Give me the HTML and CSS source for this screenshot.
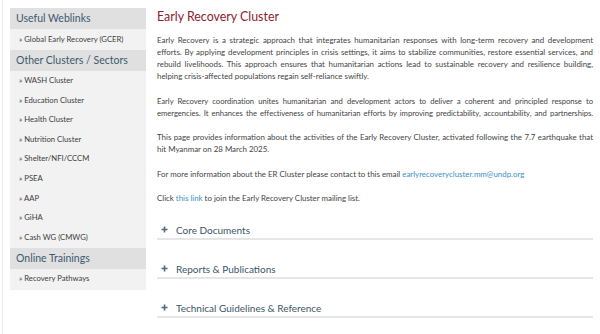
FILE: index.html
```html
<!DOCTYPE html>
<html>
<head>
    <title>Early Recovery Cluster</title>
    <link rel="stylesheet" href="styles.css">
</head>
<body>
    <div class="page">
        <div class="sidebar">
            <h3 class="side-title">Useful Weblinks</h3>
            <ul class="side-list">
                <li>» Global Early Recovery (GCER)</li>
            </ul>
            <h3 class="side-title">Other Clusters / Sectors</h3>
            <ul class="side-list">
                <li>» WASH Cluster</li>
                <li>» Education Cluster</li>
                <li>» Health Cluster</li>
                <li>» Nutrition Cluster</li>
                <li>» Shelter/NFI/CCCM</li>
                <li>» PSEA</li>
                <li>» AAP</li>
                <li>» GiHA</li>
                <li>» Cash WG (CMWG)</li>
            </ul>
            <h3 class="side-title">Online Trainings</h3>
            <ul class="side-list">
                <li>» Recovery Pathways</li>
            </ul>
        </div>
        <div class="main">
            <h1 class="title">Early Recovery Cluster</h1>
            <p>Early Recovery is a strategic approach that integrates humanitarian responses with long-term recovery and development efforts. By applying development principles in crisis settings, it aims to stabilize communities, restore essential services, and rebuild livelihoods. This approach ensures that humanitarian actions lead to sustainable recovery and resilience building, helping crisis-affected populations regain self-reliance swiftly.</p>
            <p class="tight">Early Recovery coordination unites humanitarian and development actors to deliver a coherent and principled response to<br>emergencies. It enhances the effectiveness of humanitarian efforts by improving predictability, accountability, and partnerships.</p>
            <p>This page provides information about the activities of the Early Recovery Cluster, activated following the 7.7 earthquake that hit Myanmar on 28 March 2025.</p>
            <p>For more information about the ER Cluster please contact to this email <a href="#">earlyrecoverycluster.mm@undp.org</a></p>
            <p>Click <a href="#">this link</a> to join the Early Recovery Cluster mailing list.</p>

            <div class="accordion">
                <div class="acc-item">
                    <svg class="plus" width="7" height="7" viewBox="0 0 7 7"><path d="M3.5 0.5v6M0.5 3.5h6" stroke="#4d6b80" stroke-width="1.6"/></svg>
                    <span>Core Documents</span>
                </div>
                <div class="acc-item">
                    <svg class="plus" width="7" height="7" viewBox="0 0 7 7"><path d="M3.5 0.5v6M0.5 3.5h6" stroke="#4d6b80" stroke-width="1.6"/></svg>
                    <span>Reports &amp; Publications</span>
                </div>
                <div class="acc-item">
                    <svg class="plus" width="7" height="7" viewBox="0 0 7 7"><path d="M3.5 0.5v6M0.5 3.5h6" stroke="#4d6b80" stroke-width="1.6"/></svg>
                    <span>Technical Guidelines &amp; Reference</span>
                </div>
            </div>
        </div>
    </div>
</body>
</html>
```

FILE: styles.css
```css
body {
    margin: 0;
    padding: 0;
    background: #fff;
    font-family: "Lato", "Open Sans", sans-serif;
    color: #444;
}

.page {
    display: flex;
    align-items: flex-start;
    min-height: 334px;
    margin-left: 2px;
    border-left: 1px solid #ececec;
    padding: 8px 0 0 7px;
    box-sizing: border-box;
}

.sidebar {
    width: 136px;
    background-color: #f2f2f2;
    flex-shrink: 0;
}

.side-title {
    margin: 0;
    height: 21px;
    line-height: 21px;
    padding-left: 6px;
    background-color: #e0e0e0;
    color: #3c5a6e;
    font-size: 10.5px;
    font-weight: normal;
}

.side-list {
    list-style: none;
    margin: 0;
    padding: 0.5px 0;
}

.side-list li {
    height: 19.6px;
    line-height: 19.6px;
    padding-left: 9px;
    font-size: 7.7px;
    color: #3d3d3d;
}

.main {
    width: 436px;
    margin-left: 11px;
}

.title {
    margin: 0 0 10px 0;
    padding-top: 1px;
    font-size: 12.4px;
    line-height: 15px;
    font-weight: normal;
    color: #8b1c2e;
}

.main p {
    margin: 0 0 12.5px 0;
    font-size: 7.9px;
    line-height: 12px;
    text-align: justify;
}

/* due righe piene, giustificate entrambe */
.main p.tight {
    font-size: 7.7px;
    letter-spacing: -0.05px;
    text-align-last: justify;
}

.main a {
    color: #3b8fc6;
    text-decoration: none;
}

.accordion {
    margin-top: 17px;
}

.acc-item {
    display: flex;
    align-items: center;
    gap: 8px;
    height: 17px;
    padding: 0 0 0 4px;
    margin-bottom: 20px;
    border-bottom: 2px solid #e6e6e6;
    font-size: 10px;
    color: #3c5566;
}

.plus {
    flex-shrink: 0;
}
```
